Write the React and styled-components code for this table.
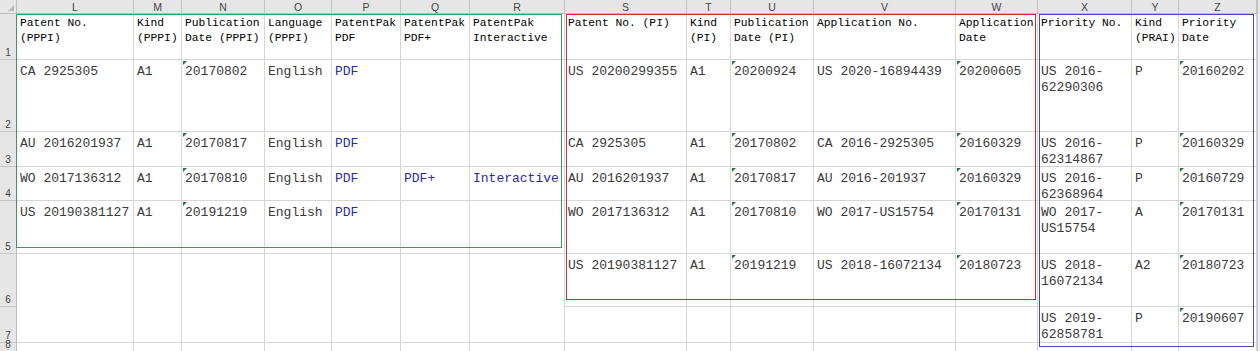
import React from "react";
import styled, { createGlobalStyle } from "styled-components";

const GlobalStyle = createGlobalStyle`
  html, body {
    margin: 0;
    background: #ffffff;
  }
  #root {
    width: 1260px;
    height: 351px;
    overflow: hidden;
  }
`;

const COLUMNS = [
  { key: "L", width: 117 },
  { key: "M", width: 48 },
  { key: "N", width: 83 },
  { key: "O", width: 67 },
  { key: "P", width: 69 },
  { key: "Q", width: 69 },
  { key: "R", width: 95 },
  { key: "S", width: 122 },
  { key: "T", width: 44 },
  { key: "U", width: 83 },
  { key: "V", width: 142 },
  { key: "W", width: 82 },
  { key: "X", width: 94 },
  { key: "Y", width: 47 },
  { key: "Z", width: 78 },
];

const ROW_HEIGHTS = [46, 72, 35, 34, 53, 53, 36, 9];

// "d:" prefix = number stored as text (green corner flag), "a:" = hyperlink
const HEADERS = [
  "Patent No.\n(PPPI)",
  "Kind\n(PPPI)",
  "Publication\nDate (PPPI)",
  "Language\n(PPPI)",
  "PatentPak\nPDF",
  "PatentPak\nPDF+",
  "PatentPak\nInteractive",
  "Patent No. (PI)",
  "Kind\n(PI)",
  "Publication\nDate (PI)",
  "Application No.",
  "Application\nDate",
  "Priority No.",
  "Kind\n(PRAI)",
  "Priority\nDate",
];

const DATA = [
  ["CA 2925305", "A1", "d:20170802", "English", "a:PDF", "", "", "US 20200299355", "A1", "d:20200924", "US 2020-16894439", "d:20200605", "US 2016-\n62290306", "P", "d:20160202"],
  ["AU 2016201937", "A1", "d:20170817", "English", "a:PDF", "", "", "CA 2925305", "A1", "d:20170802", "CA 2016-2925305", "d:20160329", "US 2016-\n62314867", "P", "d:20160329"],
  ["WO 2017136312", "A1", "d:20170810", "English", "a:PDF", "a:PDF+", "a:Interactive", "AU 2016201937", "A1", "d:20170817", "AU 2016-201937", "d:20160329", "US 2016-\n62368964", "P", "d:20160729"],
  ["US 20190381127", "A1", "d:20191219", "English", "a:PDF", "", "", "WO 2017136312", "A1", "d:20170810", "WO 2017-US15754", "d:20170131", "WO 2017-\nUS15754", "A", "d:20170131"],
  [null, null, null, null, null, null, null, "US 20190381127", "A1", "d:20191219", "US 2018-16072134", "d:20180723", "US 2018-\n16072134", "A2", "d:20180723"],
  [null, null, null, null, null, null, null, "", "", "", "", "", "US 2019-\n62858781", "P", "d:20190607"],
  ["", "", "", "", "", "", "", "", "", "", "", "", "", "", ""],
];

const RANGES = [
  { from: 2, to: 9, rowFrom: 2, rowTo: 7, color: "#3c9a58", m: "0 3px 6px -1px" },
  { from: 9, to: 14, rowFrom: 2, rowTo: 8, color: "#c2303c", m: "0 2px 7px 1px" },
  { from: 14, to: 17, rowFrom: 2, rowTo: 9, color: "#4a4aa4", m: "0 3px -4px 1px" },
];

const Sheet = styled.div`
  display: grid;
  grid-template-columns: 17px ${COLUMNS.map((c) => `${c.width}px`).join(" ")} 1fr;
  grid-template-rows: 14px ${ROW_HEIGHTS.map((h) => `${h}px`).join(" ")};
  width: 1260px;
  font-family: "Liberation Mono", "Courier New", monospace;
`;

const Corner = styled.div`
  grid-column: 1;
  grid-row: 1;
  background: #e6e6e6;
  border-right: 1px solid #bcbcbc;
  border-bottom: 1px solid #bcbcbc;
  box-sizing: border-box;
  display: flex;
  align-items: flex-end;
  justify-content: flex-end;
  padding: 0 2px 2px 0;

  &::after {
    content: "";
    width: 0;
    height: 0;
    border-left: 6px solid transparent;
    border-bottom: 6px solid #b8b8b8;
  }
`;

const ColHeader = styled.div`
  grid-column: ${(p) => p.$c};
  grid-row: 1;
  background: #e6e6e6;
  border-right: 1px solid #c4c4c4;
  border-bottom: 1px solid #bcbcbc;
  box-sizing: border-box;
  display: flex;
  align-items: center;
  justify-content: center;
  font-family: "Liberation Sans", Arial, sans-serif;
  font-size: 10.5px;
  color: #444444;
`;

const RowHeader = styled.div`
  grid-column: 1;
  grid-row: ${(p) => p.$r};
  background: #e6e6e6;
  border-right: 1px solid #bcbcbc;
  border-bottom: 1px solid #c4c4c4;
  box-sizing: border-box;
  display: flex;
  align-items: flex-end;
  justify-content: center;
  padding-bottom: 1px;
  font-family: "Liberation Sans", Arial, sans-serif;
  font-size: 10px;
  line-height: 11px;
  color: #444444;
`;

const Cell = styled.div`
  position: relative;
  grid-column: ${(p) => p.$c};
  grid-row: ${(p) => p.$r} / span ${(p) => p.$span || 1};
  border-right: 1px solid #d6d6d6;
  border-bottom: 1px solid #d6d6d6;
  box-sizing: border-box;
  padding: ${(p) => (p.$head ? "2px 0 0 3px" : "4px 0 0 3px")};
  white-space: pre;
  font-size: ${(p) => (p.$head ? "11.3px" : "13px")};
  line-height: ${(p) => (p.$head ? "15px" : "16px")};
  color: ${(p) => (p.$link ? "#2b2ba6" : p.$head ? "#000000" : "#3a3a3a")};

  ${(p) =>
    p.$flag &&
    `
    &::before {
      content: "";
      position: absolute;
      top: 1px;
      left: 1px;
      border-top: 4px solid #217a3c;
      border-right: 4px solid transparent;
    }
  `}
`;

const Filler = styled.div`
  grid-column: ${COLUMNS.length + 2};
  grid-row: ${(p) => p.$r};
  background: ${(p) => (p.$head ? "#e6e6e6" : "#f2f2f2")};
  border-left: 1px solid #c4c4c4;
`;

const RangeOutline = styled.div`
  grid-column: ${(p) => p.$from} / ${(p) => p.$to};
  grid-row: ${(p) => p.$rowFrom} / ${(p) => p.$rowTo};
  margin: ${(p) => p.$m};
  border: 1px solid ${(p) => p.$color};
  pointer-events: none;
  z-index: 2;
`;

function renderValue(raw) {
  if (raw.startsWith("a:")) return { text: raw.slice(2), link: true };
  if (raw.startsWith("d:")) return { text: raw.slice(2), flag: true };
  return { text: raw };
}

export default function App() {
  return (
    <>
      <GlobalStyle />
      <Sheet>
        <Corner />
        {COLUMNS.map((col, i) => (
          <ColHeader key={col.key} $c={i + 2}>
            {col.key}
          </ColHeader>
        ))}
        <Filler $r={1} $head />

        {ROW_HEIGHTS.map((_, i) => (
          <RowHeader key={i} $r={i + 2}>
            {i + 1}
          </RowHeader>
        ))}

        {HEADERS.map((h, i) => (
          <Cell key={`h${i}`} $c={i + 2} $r={2} $head>
            {h}
          </Cell>
        ))}

        {DATA.map((row, ri) =>
          row.map((raw, ci) => {
            // left block (L..R) rows 6-7 have no divider: one tall cell
            if (raw === null) {
              if (ri === 4) {
                return <Cell key={`${ri}-${ci}`} $c={ci + 2} $r={ri + 3} $span={2} />;
              }
              return null;
            }
            const v = renderValue(raw);
            return (
              <Cell
                key={`${ri}-${ci}`}
                $c={ci + 2}
                $r={ri + 3}
                $link={v.link}
                $flag={v.flag}
              >
                {v.text}
              </Cell>
            );
          })
        )}

        {ROW_HEIGHTS.map((_, i) => (
          <Filler key={`f${i}`} $r={i + 2} />
        ))}

        {RANGES.map((r, i) => (
          <RangeOutline
            key={i}
            $from={r.from}
            $to={r.to}
            $rowFrom={r.rowFrom}
            $rowTo={r.rowTo}
            $color={r.color}
            $m={r.m}
          />
        ))}
      </Sheet>
    </>
  );
}
